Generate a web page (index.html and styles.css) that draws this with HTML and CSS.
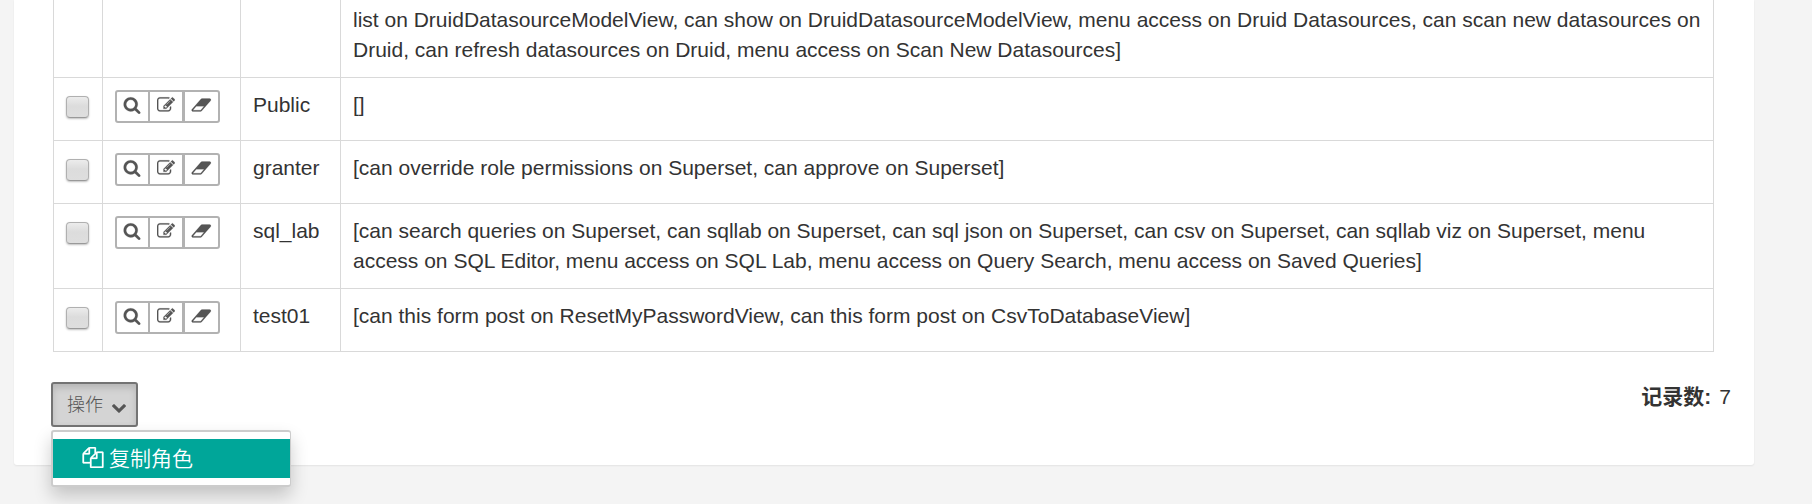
FILE: index.html
```html
<!DOCTYPE html>
<html lang="zh-CN">
<head>
<meta charset="utf-8">
<title>角色列表</title>
<link rel="stylesheet" href="styles.css">
</head>
<body>
<svg class="sprite" aria-hidden="true">
  <symbol id="search" viewBox="0 0 1792 1792"><path d="M1216 832q0-185-131.5-316.5t-316.5-131.5-316.5 131.5-131.5 316.5 131.5 316.5 316.5 131.5 316.5-131.5 131.5-316.5zm512 832q0 52-38 90t-90 38q-54 0-90-38l-343-342q-179 124-399 124-143 0-273.5-55.5t-225-150-150-225-55.5-273.5 55.5-273.5 150-225 225-150 273.5-55.5 273.5 55.5 225 150 150 225 55.5 273.5q0 220-124 399l343 343q37 37 37 90z"/></symbol>
  <symbol id="edit" viewBox="0 0 1792 1792"><path d="M888 1184l116-116-152-152-116 116v56h96v96h56zm440-720q-16-16-33 1l-350 350q-17 17-1 33t33-1l350-350q17-17 1-33zm80 594v190q0 119-84.5 203.5t-203.5 84.5h-832q-119 0-203.5-84.5t-84.5-203.5v-832q0-119 84.5-203.5t203.5-84.5h832q63 0 117 25 15 7 18 23 3 17-9 29l-49 49q-14 14-32 8-23-6-45-6h-832q-66 0-113 47t-47 113v832q0 66 47 113t113 47h832q66 0 113-47t47-113v-126q0-13 9-22l64-64q15-15 35-7t20 29zm-96-738l288 288-672 672h-288v-288zm444 132l-92 92-288-288 92-92q28-28 68-28t68 28l152 152q28 28 28 68t-28 68z"/></symbol>
  <symbol id="eraser" viewBox="0 0 2048 1792"><path d="M960 1408l336-384h-768l-336 384h768zm1013-1077q15 34 9.5 71.5t-30.5 65.5l-896 1024q-38 44-96 44h-768q-38 0-69.5-20.5t-47.5-54.5q-15-34-9.5-71.5t30.5-65.5l896-1024q38-44 96-44h768q38 0 69.5 20.5t47.5 54.5z"/></symbol>
  <symbol id="copy" viewBox="0 0 1792 1792"><path d="M1696 384q40 0 68 28t28 68v1216q0 40-28 68t-68 28h-960q-40 0-68-28t-28-68v-288h-544q-40 0-68-28t-28-68v-672q0-40 20-88t48-76l408-408q28-28 76-48t88-20h416q40 0 68 28t28 68v328q68-40 128-40h416zm-544 213l-299 299h299v-299zm-640-384l-299 299h299v-299zm196 647l316-316v-416h-384v416q0 40-28 68t-68 28h-416v640h512v-256q0-40 20-88t48-76zm956 804v-1152h-384v416q0 40-28 68t-68 28h-416v640h896z"/></symbol>
  <symbol id="chevron" viewBox="90 530 1612 1040"><path d="M1683 808l-742 741q-19 19-45 19t-45-19l-742-741q-19-19-19-45.5t19-45.5l166-165q19-19 45-19t45 19l531 531 531-531q19-19 45-19t45 19l166 165q19 19 19 45.5t-19 45.5z"/></symbol>
</svg>
<main class="panel">
  <table class="roles">
    <colgroup><col class="c-check"><col class="c-tools"><col class="c-name"><col></colgroup>
    <tbody>
      <tr class="clipped">
        <td></td><td></td><td></td>
        <td>list on DruidDatasourceModelView, can show on DruidDatasourceModelView, menu access on Druid Datasources, can scan new datasources on<br>Druid, can refresh datasources on Druid, menu access on Scan New Datasources]</td>
      </tr>
      <tr>
        <td><span class="check"></span></td>
        <td><div class="tools"><a><svg><use href="#search"/></svg></a><a><svg><use href="#edit"/></svg></a><a><svg class="wide"><use href="#eraser"/></svg></a></div></td>
        <td>Public</td>
        <td>[]</td>
      </tr>
      <tr>
        <td><span class="check"></span></td>
        <td><div class="tools"><a><svg><use href="#search"/></svg></a><a><svg><use href="#edit"/></svg></a><a><svg class="wide"><use href="#eraser"/></svg></a></div></td>
        <td>granter</td>
        <td>[can override role permissions on Superset, can approve on Superset]</td>
      </tr>
      <tr class="tall">
        <td><span class="check"></span></td>
        <td><div class="tools"><a><svg><use href="#search"/></svg></a><a><svg><use href="#edit"/></svg></a><a><svg class="wide"><use href="#eraser"/></svg></a></div></td>
        <td>sql_lab</td>
        <td>[can search queries on Superset, can sqllab on Superset, can sql json on Superset, can csv on Superset, can sqllab viz on Superset, menu<br>access on SQL Editor, menu access on SQL Lab, menu access on Query Search, menu access on Saved Queries]</td>
      </tr>
      <tr>
        <td><span class="check"></span></td>
        <td><div class="tools"><a><svg><use href="#search"/></svg></a><a><svg><use href="#edit"/></svg></a><a><svg class="wide"><use href="#eraser"/></svg></a></div></td>
        <td>test01</td>
        <td>[can this form post on ResetMyPasswordView, can this form post on CsvToDatabaseView]</td>
      </tr>
    </tbody>
  </table>
  <footer class="footer">
    <div class="dropdown">
      <button class="toggle" type="button"><span>操作</span><svg><use href="#chevron"/></svg></button>
      <ul class="menu">
        <li class="item"><svg><use href="#copy"/></svg><span>复制角色</span></li>
      </ul>
    </div>
    <div class="count"><strong>记录数:</strong><span>7</span></div>
  </footer>
</main>
</body>
</html>
```
FILE: styles.css
```css
* { box-sizing: border-box; }
body {
  margin: 0;
  height: 504px;
  overflow: hidden;
  background: #f4f4f4;
  color: #333;
  font: 21px/30px "Liberation Sans", "Noto Sans CJK SC", sans-serif;
}
.sprite { display: none; }
svg { fill: currentColor; display: block; flex: none; }
.panel {
  width: 1740px;
  height: 465px;
  margin-left: 14px;
  padding-left: 39px;
  background: #fff;
  border-radius: 0 0 3px 3px;
  box-shadow: 0 1px 2px rgba(0, 0, 0, .07);
}

.roles {
  width: 1661px;
  table-layout: fixed;
  border-collapse: separate;
  border-spacing: 0;
  border-left: 1px solid #d9d9d9;
}
.c-check { width: 49px; }
.c-tools { width: 138px; }
.c-name { width: 100px; }
.roles tr { height: 63px; }
.roles .clipped { height: 78px; }
.roles .tall { height: 85px; }
.roles td {
  padding: 12px 0 0 12px;
  vertical-align: top;
  white-space: nowrap;
  border-right: 1px solid #d9d9d9;
  border-bottom: 1px solid #d9d9d9;
}
.roles .clipped td { padding-top: 5px; }

.check {
  display: block;
  width: 23px;
  height: 22px;
  margin-top: 6px;
  border: 1px solid #b0b0b0;
  border-bottom-color: #999;
  border-radius: 4px;
  background: linear-gradient(#ececec, #dcdcdc 45%, #dedede);
  box-shadow: 0 1px 2px rgba(0, 0, 0, .25);
}
.tools {
  display: grid;
  grid-template-columns: 33px 35px 33px;
  width: 105px;
  height: 33px;
  border: 2px solid #b2b2b2;
  border-radius: 3px;
  color: #555;
}
.tools a { padding: 4.4px 0 0 6.4px; border-right: 2px solid #b2b2b2; }
.tools a:nth-child(2) { padding-left: 7px; border-right-width: 3px; }
.tools a:last-child { border-right: 0; }
.tools svg { width: 18px; height: 18px; stroke: currentColor; stroke-width: 18px; }
.tools .wide { width: 20.57px; }

.footer {
  display: flex;
  justify-content: space-between;
  align-items: flex-start;
  margin-left: -2px;
  padding: 30px 23px 0 0;
}
.dropdown { position: relative; }
.toggle {
  display: flex;
  align-items: center;
  gap: 9px;
  width: 87px;
  height: 45px;
  padding: 0 0 4px 14px;
  border: 2px solid #747474;
  border-radius: 3px;
  background: #d4d4d4;
  box-shadow: inset 0 4px 7px rgba(0, 0, 0, .14);
  color: #555;
  font: 300 18px/26px "Noto Sans CJK SC", sans-serif;
}
.toggle svg { width: 14px; height: 9px; margin-top: 11px; }
.menu {
  position: absolute;
  top: 48px;
  left: 0;
  width: 240px;
  height: 57px;
  margin: 0;
  padding: 7px 0;
  list-style: none;
  background: #fff;
  border: 2px solid #ccc;
  border-right-width: 1px;
  border-radius: 3px;
  box-shadow: 0 9px 18px rgba(0, 0, 0, .2);
}
.item {
  display: flex;
  align-items: center;
  gap: 5px;
  height: 39px;
  padding: 0 0 2px 29px;
  background: #00a699;
  color: #fff;
  font: 350 21px/30px "Noto Sans CJK SC", sans-serif;
}
.item svg { width: 22px; height: 21px; stroke: currentColor; stroke-width: 24px; }
.item span { padding-bottom: 2px; }
.count { display: flex; gap: 8px; }
```
